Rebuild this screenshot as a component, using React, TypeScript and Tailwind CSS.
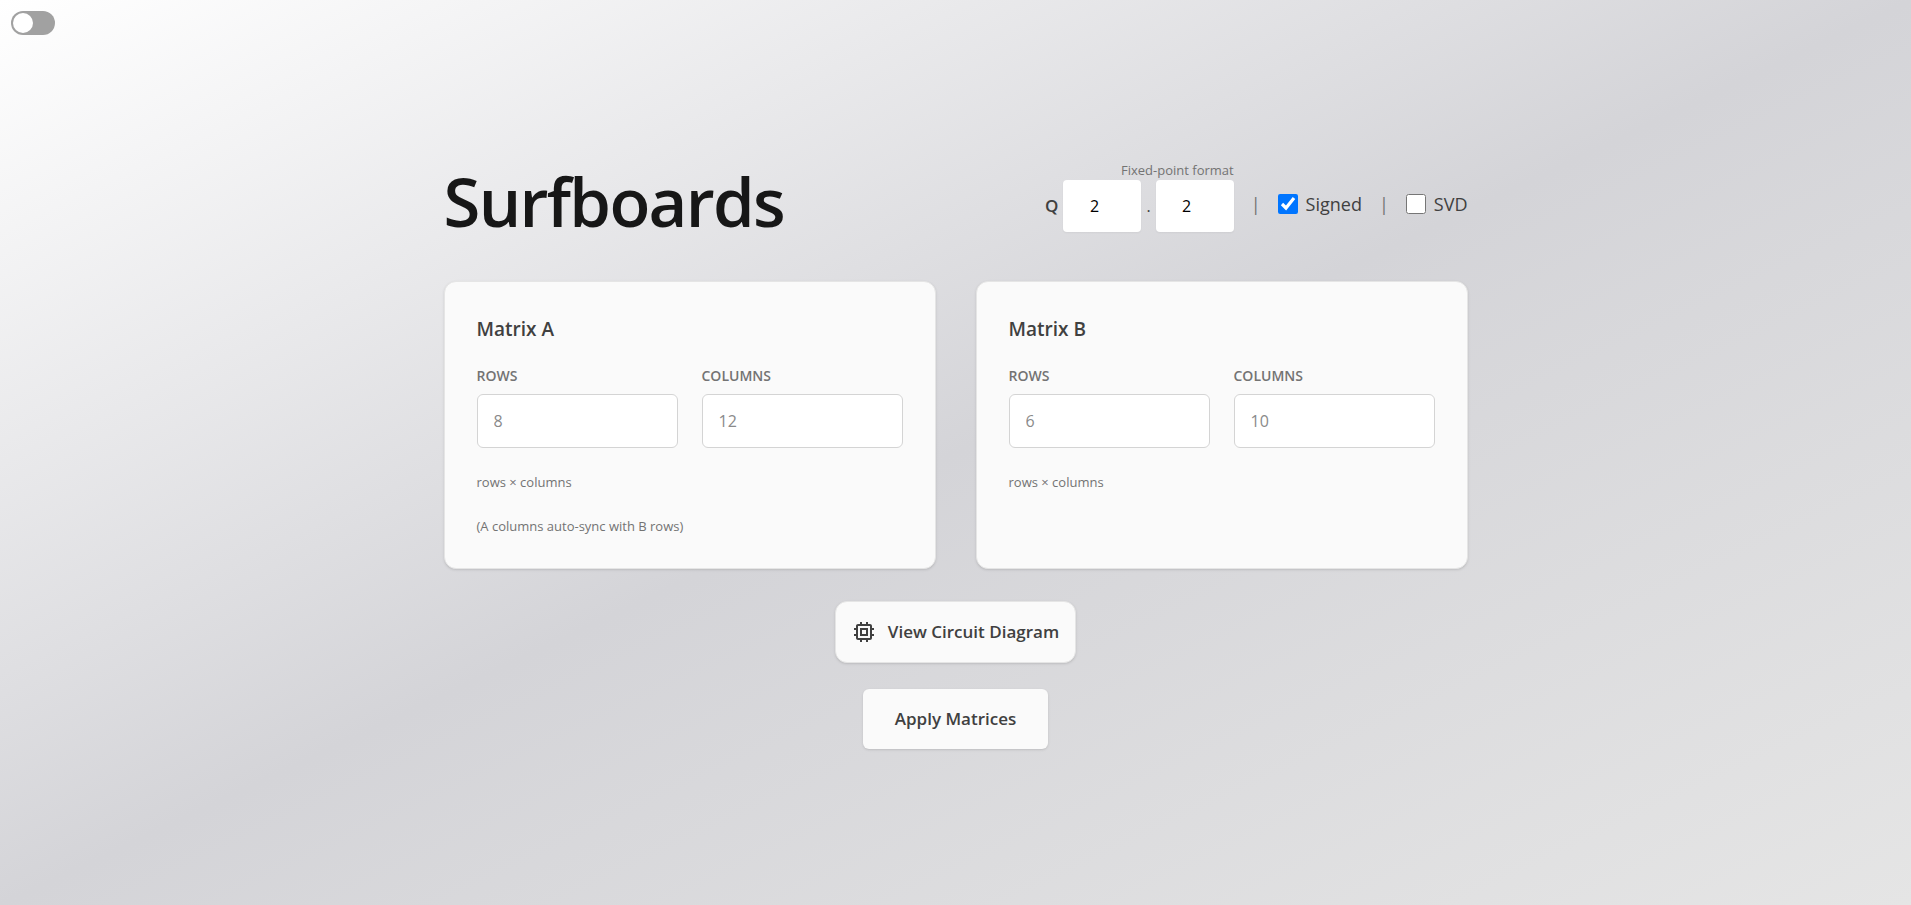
import { useState } from 'react';

type Matrix = {
  name: string;
  rows: string;
  columns: string;
  notes: string[];
};

const matrices: Matrix[] = [
  { name: 'A', rows: '8', columns: '12', notes: ['rows × columns', '(A columns auto-sync with B rows)'] },
  { name: 'B', rows: '6', columns: '10', notes: ['rows × columns'] },
];

function DimensionField({ id, label, placeholder }: { id: string; label: string; placeholder: string }) {
  return (
    <div className="flex min-w-0 flex-1 flex-col gap-2">
      <label htmlFor={id} className="text-sm leading-5 font-semibold text-[#737373] uppercase">
        {label}
      </label>
      <input
        id={id}
        type="text"
        inputMode="numeric"
        placeholder={placeholder}
        className="h-[54px] w-full rounded-md border border-[#d4d4d4] bg-white px-4 text-base font-medium text-neutral-900 placeholder:text-[#8a8a8a]"
      />
    </div>
  );
}

function MatrixCard({ matrix }: { matrix: Matrix }) {
  return (
    <section className="flex min-w-0 flex-1 flex-col rounded-xl border border-[#e5e5e5] bg-[#fafafa] p-8 shadow-sm">
      <h2 className="text-[19px] leading-[30px] font-semibold text-[#404040]">Matrix {matrix.name}</h2>
      <div className="mt-[22px] flex gap-6">
        <DimensionField id={`rows-${matrix.name}`} label="Rows" placeholder={matrix.rows} />
        <DimensionField id={`columns-${matrix.name}`} label="Columns" placeholder={matrix.columns} />
      </div>
      <div className="mt-6 flex flex-col gap-6">
        {matrix.notes.map((note) => (
          <p key={note} className="text-[13px] leading-5 text-[#737373]">
            {note}
          </p>
        ))}
      </div>
    </section>
  );
}

function BitInput({ label }: { label: string }) {
  return (
    <input
      type="text"
      inputMode="numeric"
      aria-label={label}
      defaultValue="2"
      className="h-[52px] w-[78px] rounded bg-white pr-4 text-center text-base text-black shadow-xs"
    />
  );
}

function CheckOption({ label, checked }: { label: string; checked: boolean }) {
  return (
    <label className="flex items-center gap-2 text-[#404040]">
      <input type="checkbox" defaultChecked={checked} className="size-5 accent-[#0075ff]" />
      {label}
    </label>
  );
}

function ChipIcon() {
  return (
    <svg viewBox="0 0 24 24" className="size-6 fill-current" aria-hidden="true">
      <path d="M20 16h2v-2h-2v-4h2V8h-2V6c0-1.103-.897-2-2-2h-2V2h-2v2h-4V2H8v2H6c-1.103 0-2 .897-2 2v2H2v2h2v4H2v2h2v2c0 1.103.897 2 2 2h2v2h2v-2h4v2h2v-2h2c1.103 0 2-.897 2-2v-2zM6 18V6h12l.002 12H6z" />
      <path d="M8 8v8h8V8H8zm6 6h-4v-4h4v4z" />
    </svg>
  );
}

export default function App() {
  const [dark, setDark] = useState(false);

  return (
    <div className="flex min-h-screen flex-col items-center justify-center bg-[linear-gradient(to_bottom_right,#ffffff,#d4d4d8_50%,#e5e5e5)] px-6 pt-[67px] pb-16 font-['Open_Sans','Noto_Sans',sans-serif]">
      <button
        type="button"
        role="switch"
        aria-checked={dark}
        aria-label="Dark mode"
        onClick={() => setDark(!dark)}
        className="absolute top-[11px] left-[11px] flex h-6 w-11 items-center rounded-full bg-[#a1a1a1] p-0.5"
      >
        <span className="size-5 rounded-full bg-white" />
      </button>

      <main className="flex w-full max-w-5xl flex-col items-center">
        <header className="flex w-full items-end justify-between">
          <h1 className="text-[67px] leading-[62px] font-semibold tracking-tight text-[#171717]">Surfboards</h1>
          <div className="flex items-end">
            <div role="group" aria-label="Number format" className="flex flex-col items-end">
              <span className="text-[13px] leading-5 text-[#737373]">Fixed-point format</span>
              <div className="flex items-center gap-[5px]">
                <span className="text-[17px] font-semibold text-[#404040]">Q</span>
                <BitInput label="Integer bits" />
                <span className="text-base text-[#404040]">.</span>
                <BitInput label="Fraction bits" />
              </div>
            </div>
            <div className="flex h-14 items-center gap-[17px] pl-[17px] text-lg text-[#737373]">
              <span>|</span>
              <CheckOption label="Signed" checked />
              <span>|</span>
              <CheckOption label="SVD" checked={false} />
            </div>
          </div>
        </header>

        <div className="mt-[49px] flex w-full items-stretch gap-10">
          {matrices.map((matrix) => (
            <MatrixCard key={matrix.name} matrix={matrix} />
          ))}
        </div>

        <button
          type="button"
          className="mt-8 flex h-[62px] items-center gap-3 rounded-xl border border-[#e5e5e5] bg-[#fafafa] px-4 text-[17px] font-semibold text-[#404040] shadow-sm"
        >
          <ChipIcon />
          View Circuit Diagram
        </button>
        <button
          type="button"
          className="mt-[26px] h-[60px] rounded-md bg-[#fafafa] px-8 text-[17px] font-semibold text-[#404040] shadow-sm"
        >
          Apply Matrices
        </button>
      </main>
    </div>
  );
}
